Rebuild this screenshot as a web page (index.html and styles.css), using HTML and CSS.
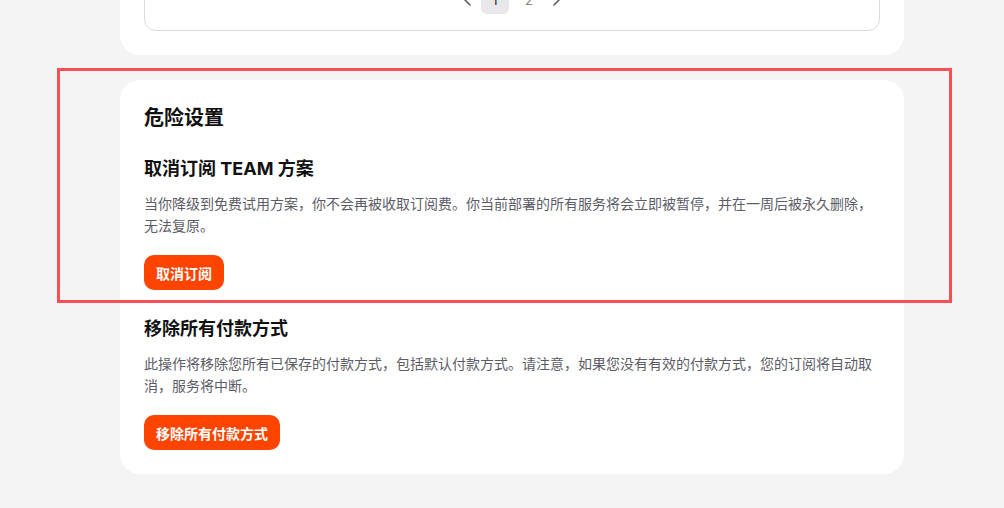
FILE: index.html
```html
<!DOCTYPE html>
<html lang="zh-CN">
<head>
<meta charset="utf-8">
<link rel="stylesheet" href="styles.css">
</head>
<body>
<div class="page">
  <div class="card card-top">
    <div class="table-box">
      <div class="pager">
        <span class="pager-arrow"><svg width="10" height="14" viewBox="0 0 10 14"><path d="M7 2 L2 7 L7 12" fill="none" stroke="#555" stroke-width="1.5" stroke-linecap="round" stroke-linejoin="round"/></svg></span>
        <span class="pager-item active">1</span>
        <span class="pager-item">2</span>
        <span class="pager-arrow"><svg width="10" height="14" viewBox="0 0 10 14"><path d="M3 2 L8 7 L3 12" fill="none" stroke="#555" stroke-width="1.5" stroke-linecap="round" stroke-linejoin="round"/></svg></span>
      </div>
    </div>
  </div>

  <div class="card card-danger">
    <h2 class="card-title">危险设置</h2>
    <section class="danger-item first">
      <h3 class="item-title">取消订阅 TEAM 方案</h3>
      <p class="item-desc">当你降级到免费试用方案，你不会再被收取订阅费。你当前部署的所有服务将会立即被暂停，并在一周后被永久删除，无法复原。</p>
      <button class="danger-btn">取消订阅</button>
    </section>
    <section class="danger-item">
      <h3 class="item-title">移除所有付款方式</h3>
      <p class="item-desc">此操作将移除您所有已保存的付款方式，包括默认付款方式。请注意，如果您没有有效的付款方式，您的订阅将自动取消，服务将中断。</p>
      <button class="danger-btn">移除所有付款方式</button>
    </section>
  </div>
  <div class="highlight"></div>
</div>
</body>
</html>
```
FILE: styles.css
```css
* { box-sizing: border-box; }
html, body {
  margin: 0;
  padding: 0;
  background: #f4f4f4;
  height: 100%;
  overflow: hidden;
}
body {
  font-family: Inter, "Noto Sans CJK SC", sans-serif;
  color: #111;
}
.page {
  position: relative;
  width: 784px;
  margin: -59px 0 0 120px;
  display: flex;
  flex-direction: column;
  gap: 25px;
}
.card {
  background: #fff;
  border-radius: 20px;
  padding: 24px;
}
.table-box {
  border: 1px solid #dcdcdc;
  border-radius: 12px;
  padding: 20px 0 16px;
  display: flex;
  justify-content: center;
}
.pager {
  display: flex;
  align-items: center;
  gap: 6px;
  font-size: 13px;
  color: #888;
}
.pager-arrow {
  width: 14px;
  height: 28px;
  display: flex;
  align-items: center;
  justify-content: center;
}
.pager-item {
  width: 28px;
  height: 28px;
  border-radius: 6px;
  display: flex;
  align-items: center;
  justify-content: center;
}
.pager-item.active {
  background: #e8e8ea;
  color: #222;
}
.card-danger {
  padding: 24px;
}
.card-title {
  margin: 0;
  font-size: 20px;
  line-height: 28px;
  font-weight: 700;
}
.danger-item {
  display: flex;
  flex-direction: column;
  align-items: flex-start;
  margin-top: 26px;
}
.danger-item.first {
  margin-top: 24px;
}
.item-title {
  margin: 0;
  font-size: 18px;
  line-height: 26px;
  font-weight: 700;
}
.item-desc {
  margin: 11px 0 0;
  font-size: 14px;
  line-height: 22px;
  color: #5c5c66;
}
.danger-btn {
  margin-top: 18px;
  height: 35px;
  padding: 0 12px;
  border: none;
  border-radius: 10px;
  background: #ff4400;
  color: #fff;
  font-family: inherit;
  font-size: 14px;
  font-weight: 700;
}
.highlight {
  position: absolute;
  left: -63px;
  top: 127px;
  width: 895px;
  height: 235px;
  border: 3px solid #fa5053;
  pointer-events: none;
}
```
